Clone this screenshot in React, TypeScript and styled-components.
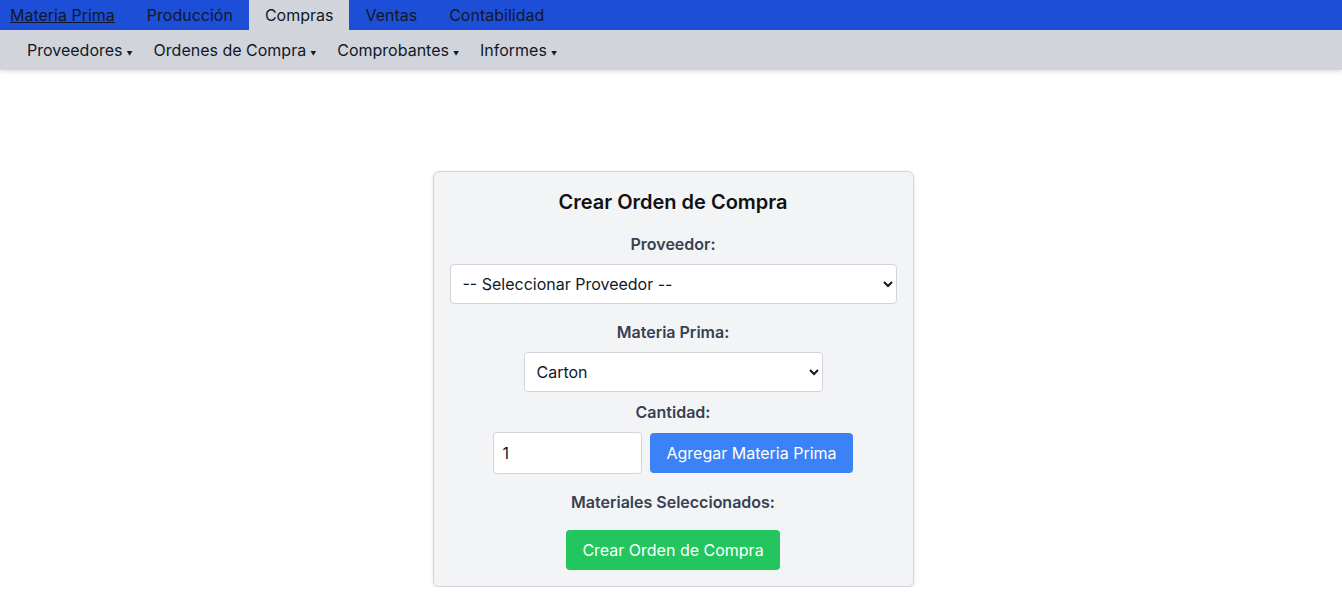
import React from "react";
import styled, { createGlobalStyle } from "styled-components";

const GlobalStyle = createGlobalStyle`
  html, body {
    margin: 0;
    padding: 0;
    background: #fff;
    font-family: Inter, "Noto Sans", sans-serif;
    color: #111827;
  }
  * {
    box-sizing: border-box;
  }
`;

const TopBar = styled.nav`
  display: flex;
  align-items: stretch;
  height: 30px;
  background: #1d4ed8;
`;

const TopItem = styled.a<{ active?: boolean; first?: boolean }>`
  display: flex;
  align-items: center;
  padding: 0 16px 0 ${({ first }) => (first ? "10px" : "16px")};
  font-size: 16px;
  color: #111827;
  text-decoration: ${({ first }) => (first ? "underline" : "none")};
  background: ${({ active }) => (active ? "#d1d5db" : "transparent")};
  cursor: pointer;
`;

const SubBar = styled.nav`
  display: flex;
  align-items: center;
  gap: 21px;
  height: 40px;
  padding: 0 27px;
  background: #d1d5db;
  box-shadow: 0 2px 4px rgba(0, 0, 0, 0.12);
`;

const SubItem = styled.span`
  display: flex;
  align-items: baseline;
  font-size: 16px;
  color: #111827;
  cursor: pointer;
`;

const Caret = styled.span`
  font-size: 6px;
  margin-left: 4px;
`;

const Main = styled.main`
  display: flex;
  justify-content: center;
  padding: 101px 0 0 4px;
`;

const Card = styled.section`
  width: 481px;
  padding: 16px;
  background: #f3f4f6;
  border: 1px solid #d1d5db;
  border-radius: 6px;
  box-shadow: 0 2px 4px rgba(0, 0, 0, 0.1);
  display: flex;
  flex-direction: column;
  align-items: center;
`;

const Title = styled.h2`
  margin: 0 0 16px;
  font-size: 20px;
  line-height: 28px;
  font-weight: 600;
  color: #111;
`;

const Label = styled.label<{ gapBelow?: number }>`
  display: block;
  margin-bottom: ${({ gapBelow }) => gapBelow ?? 8}px;
  font-size: 16px;
  line-height: 24px;
  font-weight: 600;
  color: #374151;
`;

const Select = styled.select<{ width?: number }>`
  width: ${({ width }) => (width ? `${width}px` : "100%")};
  height: 40px;
  padding: 0 8px;
  font-family: Inter, "Noto Sans", sans-serif;
  font-size: 16px;
  color: #111827;
  background: #fff;
  border: 1px solid #d1d5db;
  border-radius: 4px;
`;

const Spacer = styled.div<{ h: number }>`
  height: ${({ h }) => h}px;
`;

const Row = styled.div`
  display: flex;
  align-items: center;
  gap: 8px;
`;

const NumberInput = styled.input`
  width: 149px;
  height: 42px;
  padding: 8px;
  font-family: Inter, "Noto Sans", sans-serif;
  font-size: 16px;
  color: #111827;
  background: #fff;
  border: 1px solid #d1d5db;
  border-radius: 4px;
`;

const Button = styled.button<{ tone: "blue" | "green" }>`
  height: 40px;
  padding: 0 16px;
  border: none;
  border-radius: 4px;
  font-family: Inter, "Noto Sans", sans-serif;
  font-size: 16px;
  color: #fff;
  background: ${({ tone }) => (tone === "blue" ? "#3b82f6" : "#22c55e")};
  cursor: pointer;
`;

const topItems = ["Materia Prima", "Producción", "Compras", "Ventas", "Contabilidad"];
const subItems = ["Proveedores", "Ordenes de Compra", "Comprobantes", "Informes"];

export default function App() {
  return (
    <>
      <GlobalStyle />
      <TopBar>
        {topItems.map((item, i) => (
          <TopItem key={item} first={i === 0} active={item === "Compras"}>
            {item}
          </TopItem>
        ))}
      </TopBar>
      <SubBar>
        {subItems.map((item) => (
          <SubItem key={item}>
            {item}
            <Caret>▼</Caret>
          </SubItem>
        ))}
      </SubBar>
      <Main>
        <Card>
          <Title>Crear Orden de Compra</Title>
          <Label>Proveedor:</Label>
          <Select defaultValue="">
            <option value="">-- Seleccionar Proveedor --</option>
          </Select>
          <Spacer h={16} />
          <Label>Materia Prima:</Label>
          <Select width={299} defaultValue="carton">
            <option value="carton">Carton</option>
          </Select>
          <Spacer h={8} />
          <Label>Cantidad:</Label>
          <Row>
            <NumberInput type="number" defaultValue={1} />
            <Button tone="blue">Agregar Materia Prima</Button>
          </Row>
          <Spacer h={16} />
          <Label gapBelow={16}>Materiales Seleccionados:</Label>
          <Button tone="green">Crear Orden de Compra</Button>
        </Card>
      </Main>
    </>
  );
}
